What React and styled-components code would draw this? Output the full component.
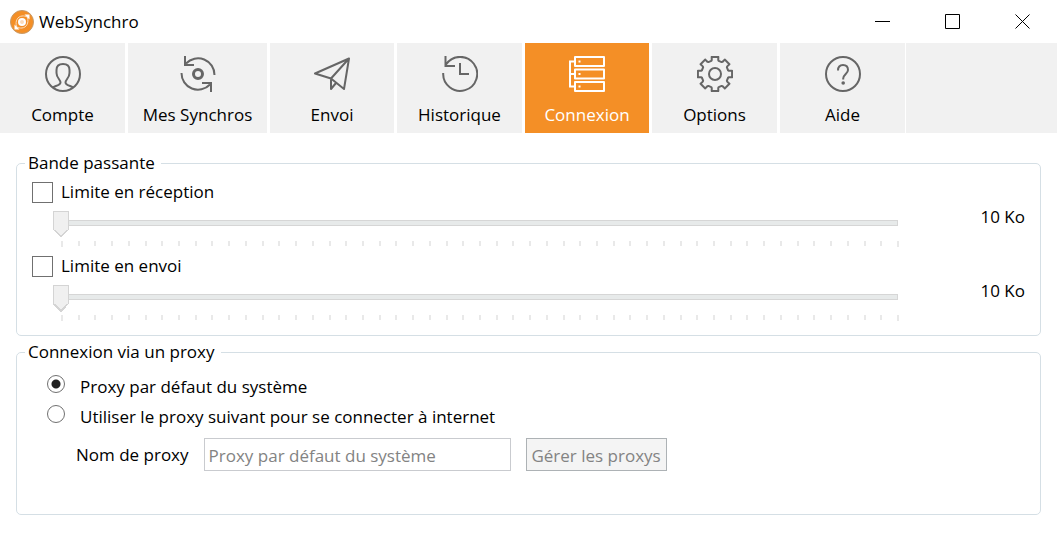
import React, { useState } from "react";
import styled, { createGlobalStyle, css } from "styled-components";

const GlobalStyle = createGlobalStyle`
  *, *::before, *::after { box-sizing: border-box; }
  body {
    margin: 0;
    background: #fff;
    color: #000;
    font: 17px/24px "Open Sans", "Noto Sans", sans-serif;
  }
  button, input { font: inherit; color: inherit; }
`;

const TitleBar = styled.header`
  display: flex;
  align-items: center;
  height: 43px;
  padding-left: 10px;
`;

const AppTitle = styled.h1`
  flex: 1;
  margin: 0 0 0 5px;
  font-size: 17px;
  font-weight: 400;
`;

const WindowButton = styled.button`
  display: flex;
  align-items: center;
  justify-content: center;
  width: 70px;
  height: 41px;
  padding: 0;
  border: 0;
  background: none;
`;

const TabBar = styled.nav`
  display: flex;
  height: 90px;
`;

const Tab = styled.button`
  display: flex;
  flex: none;
  flex-direction: column;
  align-items: center;
  gap: 11px;
  width: ${(p) => p.$width}px;
  margin: 0 3px 0 0;
  padding: 13px 0 0;
  border: 0;
  background: ${(p) => (p.$active ? "#f48f26" : "#f1f1f1")};
  color: ${(p) => (p.$active ? "#fff" : "#000")};

  svg { color: ${(p) => (p.$active ? "#fff" : "#666")}; }
  &:last-of-type { margin-right: 1px; }
`;

const TabFiller = styled.div`
  flex: 1;
  background: #f1f1f1;
`;

const Content = styled.main`
  display: flex;
  flex-direction: column;
  gap: 4px;
  padding: 18px 16px 0;
`;

const Group = styled.fieldset`
  min-width: 0;
  margin: 0;
  padding: 0;
  border: 1px solid #d5dfe5;
  border-radius: 5px;
`;

const Legend = styled.legend`
  margin-left: 8px;
  padding: 0 6px 0 3px;
`;

const LimitList = styled.div`
  padding: 5px 15px 7px;
`;

const ProxyOptions = styled.div`
  padding: 11px 15px 43px 30px;
`;

const LimitRow = styled.div`
  display: grid;
  grid-template-columns: 1fr 119px;
  height: 74px;
`;

const CheckLabel = styled.label`
  display: flex;
  align-items: center;
  gap: 8px;
  width: max-content;
  height: 24px;
`;

const CheckBox = styled.input`
  appearance: none;
  width: 21px;
  height: 21px;
  margin: 0;
  border: 1px solid #707070;
  background: #fff;
  &:checked { background: radial-gradient(#212121 50%, #fff 52%); }
`;

const SliderBox = styled.div`
  margin: 7px 0 0 21px;
`;

const Slider = styled.input`
  appearance: none;
  display: block;
  width: 100%;
  height: 27px;
  margin: 0;
  background:
    linear-gradient(#e7eaea, #e7eaea) 9px 10px / calc(100% - 18px) 4px no-repeat,
    linear-gradient(#d6d6d6, #d6d6d6) 8px 9px / calc(100% - 16px) 6px no-repeat;

  &::-webkit-slider-thumb {
    appearance: none;
    width: 16px;
    height: 27px;
    background:
      linear-gradient(#f0f0f0, #f0f0f0) 1px 1px / 14px 18px no-repeat,
      linear-gradient(#d4d4d4, #d4d4d4) 0 0 / 16px 19px no-repeat,
      linear-gradient(45deg, transparent 50%, #d4d4d4 50%, #d4d4d4 68%, #f0f0f0 68%) 0 19px / 8px 8px no-repeat,
      linear-gradient(-45deg, transparent 50%, #d4d4d4 50%, #d4d4d4 68%, #f0f0f0 68%) 8px 19px / 8px 8px no-repeat;
  }
`;

const Ticks = styled.div`
  display: flex;
  justify-content: space-between;
  height: 6px;
  margin: 3px 7px 0 8px;
`;

const Tick = styled.span`
  width: 2px;
  height: 5px;
  background: #e9e9e9;
  &:first-child, &:last-child { height: 6px; }
`;

const LimitValue = styled.output`
  align-self: center;
  text-align: right;
`;

const RadioLabel = styled.label`
  display: flex;
  align-items: flex-start;
  gap: 15px;
  width: max-content;
  height: 30px;
`;

const Radio = styled.input`
  appearance: none;
  width: 18px;
  height: 18px;
  margin: 0;
  border: 1px solid #707070;
  border-radius: 50%;
  background: #fff;
  ${(p) => p.checked && css`
    background: radial-gradient(circle, #212121 4px, #fff 5px);
  `}
`;

const ProxyRow = styled.div`
  display: flex;
  align-items: center;
  gap: 15px;
  margin: 3px 0 0 29px;
`;

const ProxyInput = styled.input`
  width: 307px;
  height: 33px;
  padding: 2px 4px 0;
  border: 1px solid #c9cbcf;
  background: #fff;
  color: #838383;
`;

const ProxyButton = styled.button`
  width: 141px;
  height: 33px;
  padding: 2px 0 0;
  border: 1px solid #adb2b5;
  background: #f4f4f4;
  color: #838383;
  white-space: nowrap;
`;

const Logo = () => (
  <svg width="24" height="24" viewBox="0 0 24 24" fill="none" aria-hidden="true">
    <circle cx="12" cy="12" r="11.5" fill="#f48f26" stroke="#c79a68" />
    <circle cx="12" cy="12" r="3" fill="#fbdcbb" stroke="#fff" strokeWidth="2" />
    <path d="M6.5 16.500C5 11 7.500 6.500 12 6C14 5.800 16 6 17.500 7.500M17.500 7.500C19 13 16.500 17.500 12 18C10 18.200 8 18 6.500 16.500" stroke="#fbdcbb" strokeWidth="1" />
    <path d="M14.500 4.500H19.500V9.500zM4.500 14.500V19.500H9.500z" fill="#fff" />
  </svg>
);

const TabIcon = ({ children }) => (
  <svg width="36" height="36" viewBox="0 0 36 36" fill="none" stroke="currentColor" strokeWidth="2" aria-hidden="true">
    {children}
  </svg>
);

const gearPath = () => {
  const points = [];
  for (let i = 0; i < 8; i += 1) {
    [[-16, 13.6], [-13, 14.4], [-11, 17.4], [11, 17.4], [13, 14.4], [16, 13.6]].forEach(([offset, radius]) => {
      const angle = ((i * 45 + offset) * Math.PI) / 180;
      points.push(`${(18 + radius * Math.sin(angle)).toFixed(2)} ${(18 - radius * Math.cos(angle)).toFixed(2)}`);
    });
  }
  return `M${points.join("L")}Z`;
};

const icons = {
  account: (
    <>
      <circle cx="18" cy="18" r="17" />
      <path d="M8 31.500C9 30 15.500 29.500 15.500 26.500C15.500 23.500 11.500 22 11.500 17V14C11.500 10 14 8 18 8S24.500 10 24.500 14V17C24.500 22 20.500 23.500 20.500 26.500C20.500 29.500 27 30 28 31.500" />
    </>
  ),
  sync: (
    <>
      <circle cx="18" cy="18" r="4.5" strokeWidth="3" />
      <path d="M34.500 19A16.500 16.500 0 0 0 6 7.500M5 0V9H14M1.500 17A16.500 16.500 0 0 0 30 28.500M31 36V27H22" />
    </>
  ),
  send: <path d="M35 2.500L1 17.500L17 22.500L30 33L35 2.500L17 22.500V33L22 27" strokeLinejoin="round" />,
  history: (
    <>
      <path d="M1.200 17A17 17 0 1 0 4 8.500M3.500 0V10H13" />
      <path d="M18 7V18H27" />
    </>
  ),
  connection: (
    <>
      <path d="M6 1H35V10H6ZM6 13.500H35V22.500H6ZM6 26H35V35H6Z" strokeLinejoin="round" />
      <path d="M6 5.500H1V30.500H6M1 18H6M9.500 5.500H11.500M9.500 18H11.500M9.500 30.500H11.500" />
    </>
  ),
  options: (
    <>
      <path d={gearPath()} strokeLinejoin="round" />
      <circle cx="18" cy="18" r="6" />
    </>
  ),
  help: (
    <>
      <circle cx="18" cy="18" r="17" />
      <path d="M13 14.500C13 11 15 9 18 9S23 11 23 14C23 17.500 18.200 18.500 18.200 22.500V23.500" />
      <circle cx="18.200" cy="27" r="1.800" fill="currentColor" stroke="none" />
    </>
  ),
};

const tabs = [
  { id: "account", label: "Compte", width: 125 },
  { id: "sync", label: "Mes Synchros", width: 139 },
  { id: "send", label: "Envoi", width: 124 },
  { id: "history", label: "Historique", width: 125 },
  { id: "connection", label: "Connexion", width: 124 },
  { id: "options", label: "Options", width: 125 },
  { id: "help", label: "Aide", width: 125 },
];

const windowControls = [
  { label: "Réduire", path: "M0 7.500H15" },
  { label: "Agrandir", path: "M0.500 0.500H14.500V14.500H0.500Z" },
  { label: "Fermer", path: "M0.500 0.500L14.500 14.500M14.500 0.500L0.500 14.500" },
];

const TICKS = Array.from({ length: 51 }, (_, i) => i);

function BandwidthLimit({ label }) {
  const [value, setValue] = useState(10);
  return (
    <LimitRow>
      <div>
        <CheckLabel>
          <CheckBox type="checkbox" />
          {label}
        </CheckLabel>
        <SliderBox>
          <Slider
            type="range"
            min="10"
            max="510"
            step="10"
            value={value}
            aria-label={label}
            onChange={(e) => setValue(Number(e.target.value))}
          />
          <Ticks>{TICKS.map((i) => <Tick key={i} />)}</Ticks>
        </SliderBox>
      </div>
      <LimitValue>{value} Ko</LimitValue>
    </LimitRow>
  );
}

export default function App() {
  const [active, setActive] = useState("connection");
  const [proxy, setProxy] = useState("system");
  return (
    <>
      <GlobalStyle />
      <TitleBar>
        <Logo />
        <AppTitle>WebSynchro</AppTitle>
        {windowControls.map(({ label, path }) => (
          <WindowButton key={label} type="button" aria-label={label}>
            <svg width="15" height="15" viewBox="0 0 15 15" fill="none" stroke="#000" aria-hidden="true">
              <path d={path} />
            </svg>
          </WindowButton>
        ))}
      </TitleBar>
      <TabBar>
        {tabs.map(({ id, label, width }) => (
          <Tab key={id} type="button" $width={width} $active={id === active} onClick={() => setActive(id)}>
            <TabIcon>{icons[id]}</TabIcon>
            {label}
          </Tab>
        ))}
        <TabFiller />
      </TabBar>
      <Content>
        <Group>
          <Legend>Bande passante</Legend>
          <LimitList>
            <BandwidthLimit label="Limite en réception" />
            <BandwidthLimit label="Limite en envoi" />
          </LimitList>
        </Group>
        <Group>
          <Legend>Connexion via un proxy</Legend>
          <ProxyOptions>
            <RadioLabel>
              <Radio type="radio" name="proxy" checked={proxy === "system"} onChange={() => setProxy("system")} />
              Proxy par défaut du système
            </RadioLabel>
            <RadioLabel>
              <Radio type="radio" name="proxy" checked={proxy === "custom"} onChange={() => setProxy("custom")} />
              Utiliser le proxy suivant pour se connecter à internet
            </RadioLabel>
            <ProxyRow>
              <label htmlFor="proxy-name">Nom de proxy</label>
              <ProxyInput id="proxy-name" type="text" defaultValue="Proxy par défaut du système" disabled={proxy === "system"} />
              <ProxyButton type="button" disabled={proxy === "system"}>Gérer les proxys</ProxyButton>
            </ProxyRow>
          </ProxyOptions>
        </Group>
      </Content>
    </>
  );
}
